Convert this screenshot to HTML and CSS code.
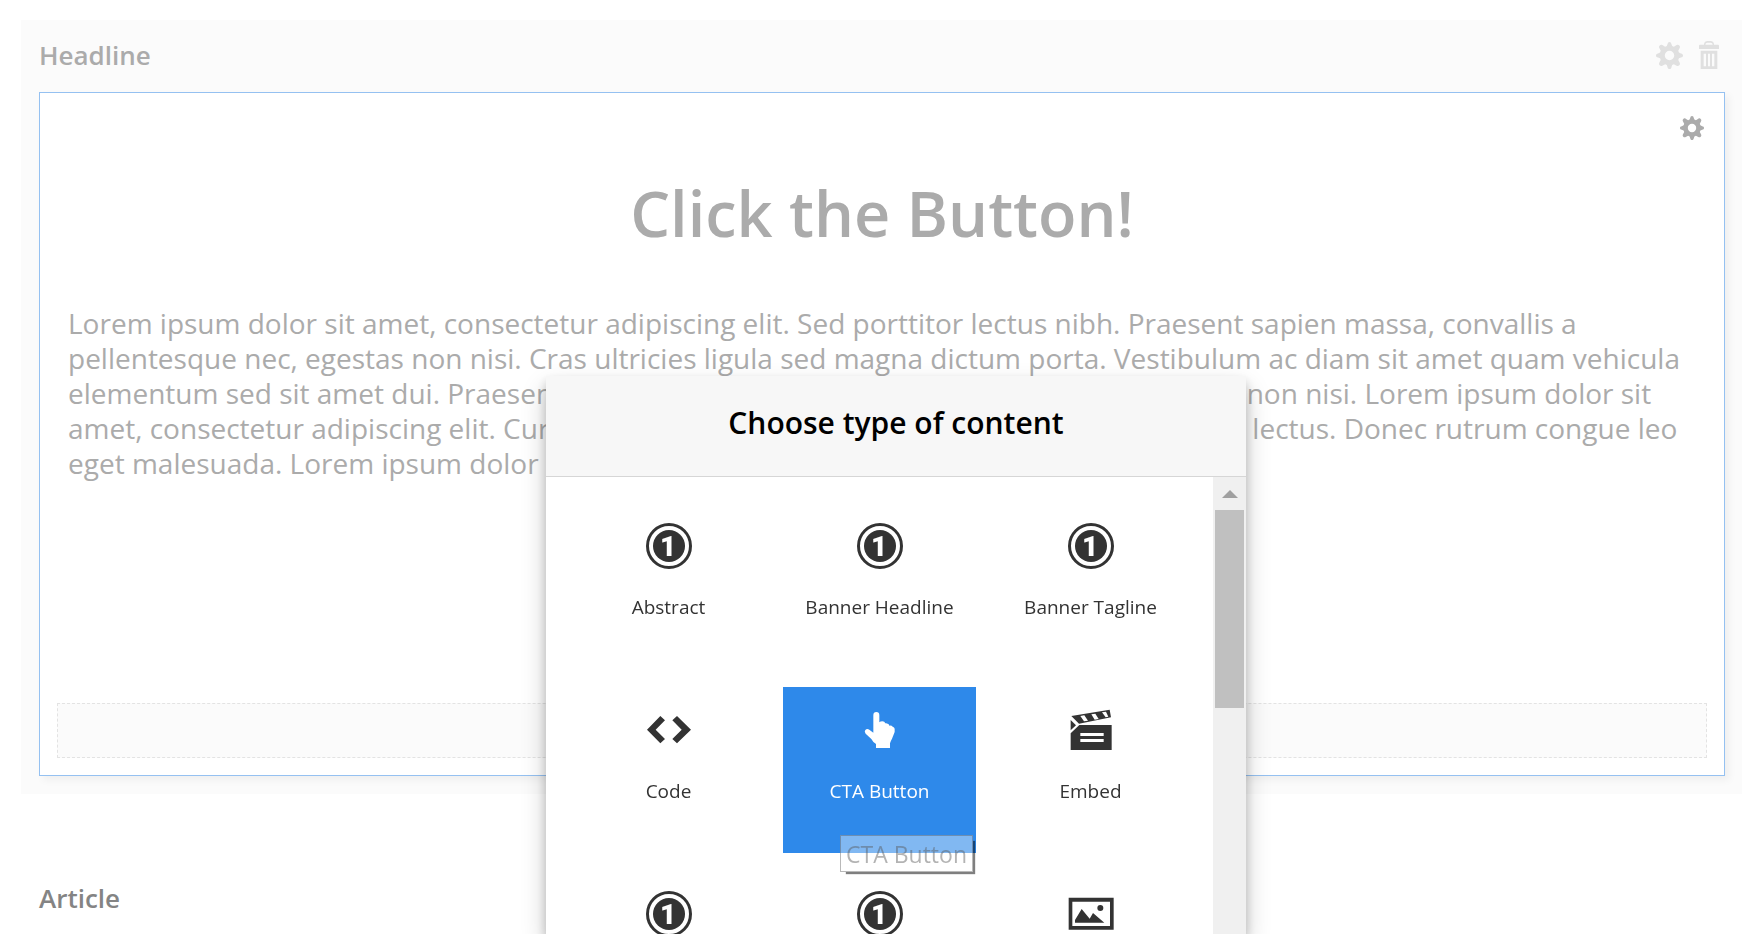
FILE: index.html
```
<!DOCTYPE html>
<html lang="en">
<head>
<meta charset="UTF-8" />
<title>Content editor</title>
<link rel="stylesheet" href="styles.css">
</head>
<body>
<svg class="sprite" aria-hidden="true">
  <symbol id="gear" viewBox="0 0 80 80">
    <path fill-rule="evenodd" d="M40 0c4 0 5 3 6 7l2 5 5 2 8-5c4-2 6-1 8 1s3 5 1 8l-4 8 2 5 6 3c4 1 6 2 6 6s-2 5-6 6l-6 2-2 5 4 8c2 4 1 6-1 8s-5 3-8 1l-8-4-5 2-2 6c-1 4-2 6-6 6s-5-2-6-6l-2-6-5-2-8 4c-3 2-6 1-8-1s-3-4-1-8l4-8-2-5-6-2c-4-1-6-2-6-6s2-5 6-6l6-3 2-5-4-8c-2-3-1-6 1-8s4-3 8-1l8 5 5-2 2-5c1-4 2-7 6-7zm0 26a14 14 0 1 0 0 28 14 14 0 1 0 0-28z"/>
  </symbol>
  <symbol id="trash" viewBox="0 0 60 84">
    <path fill-rule="evenodd" d="M15 11q0-11 11-11h8q11 0 11 11h12q3 0 3 3v10H0V14q0-3 3-3zm4 0h22q0-6-7-6h-8q-7 0-7 6zM5 29h50v55H5z"/>
    <path class="slot" d="M14 38h7v38h-7zM27 38h6v38h-6zM39 38h7v38h-7z"/>
  </symbol>
  <symbol id="one" viewBox="0 0 46 46">
    <circle cx="23" cy="23" r="21.5" fill="none" stroke="currentColor" stroke-width="3"/>
    <circle cx="23" cy="23" r="16"/>
    <text class="numeral" x="22" y="33" text-anchor="middle">1</text>
  </symbol>
</svg>

<main class="page">
  <section class="panel">
    <header class="panel-head">
      <h2 class="panel-title">Headline</h2>
      <div class="panel-tools">
        <button class="tool" aria-label="Settings"><svg class="gear-large"><use href="#gear"/></svg></button>
        <button class="tool" aria-label="Delete"><svg class="trash"><use href="#trash"/></svg></button>
      </div>
    </header>
    <div class="box">
      <div class="box-tools">
        <button class="tool tool-dark" aria-label="Content settings"><svg class="gear-small"><use href="#gear"/></svg></button>
      </div>
      <h1 class="box-title">Click the Button!</h1>
      <p class="box-text">Lorem ipsum dolor sit amet, consectetur adipiscing elit. Sed porttitor lectus nibh. Praesent sapien massa, convallis a pellentesque nec, egestas non nisi. Cras ultricies ligula sed magna dictum porta. Vestibulum ac diam sit amet quam vehicula elementum sed sit amet dui. Praesent sapien massa, convallis a pellentesque nec, egestas non nisi. Lorem ipsum dolor sit amet, consectetur adipiscing elit. Curabitur non nulla sit amet nisl tempus convallis quis ac lectus. Donec rutrum congue leo eget malesuada. Lorem ipsum dolor sit amet.</p>
      <div class="dropzone"></div>
    </div>
  </section>
  <section class="article">
    <h2 class="panel-title article-title">Article</h2>
  </section>
</main>

<div class="modal" role="dialog" aria-labelledby="modalTitle">
  <header class="modal-head">
    <h2 class="modal-title" id="modalTitle">Choose type of content</h2>
  </header>
  <div class="modal-body">
    <div class="types">
      <button class="type"><svg class="icon"><use href="#one"/></svg>Abstract</button>
      <button class="type"><svg class="icon"><use href="#one"/></svg>Banner Headline</button>
      <button class="type"><svg class="icon"><use href="#one"/></svg>Banner Tagline</button>
      <button class="type">
        <svg class="icon" viewBox="0 0 138 138"><path d="M3 68 43 27 57 40 29 68 57 96 43 109zM135 68 93 27 79 40 107 68 79 96 93 109z"/></svg>
        Code
      </button>
      <button class="type active">
        <svg class="icon" viewBox="0 0 138 138"><path d="M49 25q0-10 9-10t9 10v21q3-3 9-3 7 0 9 6 3-1 7 1 5 2 5 6 7-1 10 3 5 2 6 6v10l-8 20q-5 9-6 14v14H57v-12q-9-5-14-15L26 80q-5-6-1-11 5-5 12-1l12 9z"/></svg>
        CTA Button
        <span class="tooltip" role="tooltip">CTA Button</span>
      </button>
      <button class="type">
        <svg class="icon" viewBox="0 0 138 138">
          <path d="M34 54H131V129H8V79zM8 39 24 55 8 70zM10 27 125 8 129 31 33 50z"/>
          <path class="cutout" d="M37 27 49 25 60 41 48 43zM70 22 82 20 92 36 80 38zM102 16 114 14 121 29 113 31zM37 78H107V87H37zM37 96H107V105H37z"/>
        </svg>
        Embed
      </button>
      <button class="type" aria-label="Heading"><svg class="icon"><use href="#one"/></svg></button>
      <button class="type" aria-label="Text"><svg class="icon"><use href="#one"/></svg></button>
      <button class="type" aria-label="Image">
        <svg class="icon" viewBox="0 0 138 138"><path fill-rule="evenodd" d="M2 20H137V116H2zM13 32V105H126V32z"/><path d="M21 95V87L41 54 65 83 75 66 109 95z"/><circle cx="97" cy="51" r="9"/></svg>
      </button>
    </div>
    <div class="scrollbar">
      <div class="scroll-arrow"></div>
      <div class="scroll-thumb"></div>
    </div>
  </div>
</div>
</body>
</html>
```
FILE: styles.css
```
body {
  margin: 0;
  background-color: #fff;
  font-family: "Open Sans", sans-serif;
  overflow: hidden;
}
h1, h2, p {
  margin: 0;
}
button {
  padding: 0;
  border: 0;
  background: none;
  font-family: inherit;
}
svg {
  display: block;
  fill: currentColor;
}
.sprite {
  display: none;
}
.page {
  padding: 20px 0 0 21px;
}
.panel {
  padding: 0 17px 18px 18px;
  background-color: #fbfbfb;
}
.panel-head {
  display: flex;
  align-items: center;
  justify-content: space-between;
  height: 70px;
  padding-bottom: 2px;
}
.panel-title {
  color: #ababab;
  font-size: 26px;
  font-weight: 600;
  line-height: 36px;
}
.panel-tools {
  display: flex;
  align-items: center;
  gap: 16px;
  padding-right: 6px;
}
.tool {
  color: #e0e0e0;
}
.tool-dark {
  color: #ababab;
}
.gear-large {
  width: 27px;
  height: 27px;
}
.gear-small {
  width: 24px;
  height: 24px;
}
.trash {
  width: 20px;
  height: 28px;
}
.slot {
  fill: #fbfbfb;
}
.box {
  padding: 17px;
  border: 1px solid #95c1f1;
  background-color: #fff;
  box-shadow: 4px 4px 8px rgba(0, 0, 0, 0.05);
}
.box-tools {
  display: flex;
  justify-content: flex-end;
  padding: 6px 3px 0 0;
}
.box-title {
  margin-top: 28px;
  color: #ababab;
  font-size: 63px;
  font-weight: 600;
  line-height: 90px;
  text-align: center;
}
.box-text {
  min-height: 397px;
  padding: 48px 12px 0 11px;
  color: #ababab;
  font-size: 28px;
  line-height: 35px;
}
.dropzone {
  height: 53px;
  border: 1px dashed #e3e3e3;
  background-color: #fbfbfb;
}
.article {
  padding: 86px 18px 0;
}
.article-title {
  color: #848484;
}
.modal {
  position: fixed;
  top: 376px;
  bottom: 0;
  left: 50%;
  display: flex;
  flex-direction: column;
  width: 700px;
  margin-left: -325px;
  background-color: #fff;
  box-shadow: 0 12px 24px rgba(0, 0, 0, 0.2), 0 6px 10px rgba(0, 0, 0, 0.2);
}
.modal-head {
  padding: 27px 0 33px;
  border-bottom: 1px solid #d6d6d6;
  background-color: #f7f7f7;
}
.modal-title {
  color: #000;
  font-size: 30px;
  font-weight: 600;
  line-height: 40px;
  text-align: center;
}
.modal-body {
  display: flex;
  flex: 1;
  min-height: 0;
  overflow: hidden;
}
.types {
  display: grid;
  flex: 1;
  grid-template-columns: repeat(3, 1fr);
  grid-auto-rows: 166px;
  gap: 18px;
  padding: 26px;
}
.type {
  position: relative;
  display: flex;
  flex-direction: column;
  align-items: center;
  padding-top: 20px;
  color: #333;
  font-size: 19px;
  line-height: 26px;
}
.type.active {
  background-color: #2e89ea;
  color: #fff;
}
.icon {
  width: 46px;
  height: 46px;
  margin-bottom: 25px;
}
.numeral {
  fill: #fff;
  font-family: Roboto, sans-serif;
  font-size: 28px;
  font-weight: 900;
}
.cutout {
  fill: #fff;
}
.tooltip {
  position: absolute;
  right: 3px;
  bottom: -19px;
  padding: 3px 5px 1px;
  border: 1px solid rgba(80, 80, 80, 0.4);
  background-color: rgba(255, 255, 255, 0.4);
  box-shadow: 4px 4px 1px -2px rgba(0, 0, 0, 0.5);
  color: rgba(87, 87, 87, 0.45);
  font-size: 23px;
  line-height: 31px;
  white-space: nowrap;
}
.scrollbar {
  display: flex;
  flex-direction: column;
  align-items: center;
  width: 33px;
  background-color: #f0f0f0;
}
.scroll-arrow {
  margin: 13px 0 12px;
  border-right: 8px solid transparent;
  border-bottom: 8px solid #a0a0a0;
  border-left: 8px solid transparent;
}
.scroll-thumb {
  width: 29px;
  height: 198px;
  background-color: #c0c0c0;
}
```
